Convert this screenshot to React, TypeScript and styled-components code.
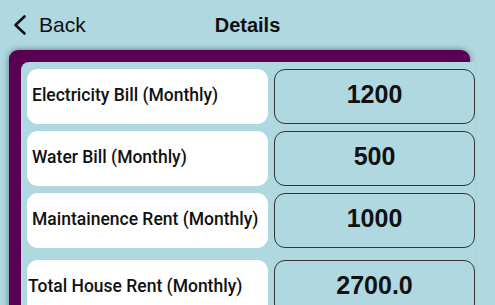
import React from 'react'
import styled, { createGlobalStyle } from 'styled-components'

const GlobalStyle = createGlobalStyle`
  html, body {
    margin: 0;
    padding: 0;
    background: #b0d8e0;
    overflow: hidden;
  }
  body {
    font-family: 'Liberation Sans', Arial, sans-serif;
    color: #111;
  }
`

const Page = styled.div`
  width: 495px;
  height: 305px;
  background: #b0d8e0;
  overflow: hidden;
`

const Header = styled.div`
  height: 50px;
  display: grid;
  grid-template-columns: 1fr auto 1fr;
  align-items: center;
`

const BackButton = styled.div`
  display: flex;
  align-items: center;
  gap: 12px;
  padding-left: 12px;
  font-size: 21px;
  color: #111;
`

const Title = styled.div`
  font-size: 20px;
  font-weight: 700;
`

const Card = styled.div`
  margin: 0 25px 0 9px;
  padding: 12px 0 0 12px;
  background: #5a0052;
  border-radius: 9px 9px 0 0;
  box-shadow: 0 0 6px rgba(0, 0, 0, 0.45);
`

const CardBody = styled.div`
  background: #b0d8e0;
  border-top-left-radius: 8px;
  padding: 7px 0 20px 6px;
  margin-right: -5px;
  display: flex;
  flex-direction: column;
  gap: 7px;
`

const Row = styled.div<{ $spaced?: boolean }>`
  display: grid;
  grid-template-columns: 241px 201px;
  column-gap: 6px;
  height: 55px;
  margin-top: ${p => (p.$spaced ? '5px' : '0')};
`

const Label = styled.div<{ $tight?: boolean }>`
  background: #fff;
  border-radius: 11px;
  display: flex;
  align-items: center;
  padding: 0 0 3px ${p => (p.$tight ? '1px' : '5px')};
  font-family: Roboto, 'Liberation Sans', sans-serif;
  font-size: 17.5px;
  font-weight: 500;
  white-space: nowrap;
`

const Value = styled.div`
  border: 1.5px solid #333;
  border-radius: 11px;
  display: flex;
  align-items: center;
  justify-content: center;
  padding-bottom: 5px;
  font-size: 25px;
  font-weight: 700;
`

const rows = [
  { label: 'Electricity Bill (Monthly)', value: '1200' },
  { label: 'Water Bill (Monthly)', value: '500' },
  { label: 'Maintainence Rent (Monthly)', value: '1000' },
]

export default function App() {
  return (
    <Page>
      <GlobalStyle />
      <Header>
        <BackButton>
          <svg width="15" height="22" viewBox="0 0 15 22">
            <path d="M12.5 2.5 L3.5 11 L12.5 19.5" fill="none" stroke="#111" strokeWidth="2.6" strokeLinecap="round" strokeLinejoin="round" />
          </svg>
          <span>Back</span>
        </BackButton>
        <Title>Details</Title>
        <div />
      </Header>
      <Card>
        <CardBody>
          {rows.map(r => (
            <Row key={r.label}>
              <Label>{r.label}</Label>
              <Value>{r.value}</Value>
            </Row>
          ))}
          <Row $spaced>
            <Label $tight>Total House Rent (Monthly)</Label>
            <Value>2700.0</Value>
          </Row>
        </CardBody>
      </Card>
    </Page>
  )
}
